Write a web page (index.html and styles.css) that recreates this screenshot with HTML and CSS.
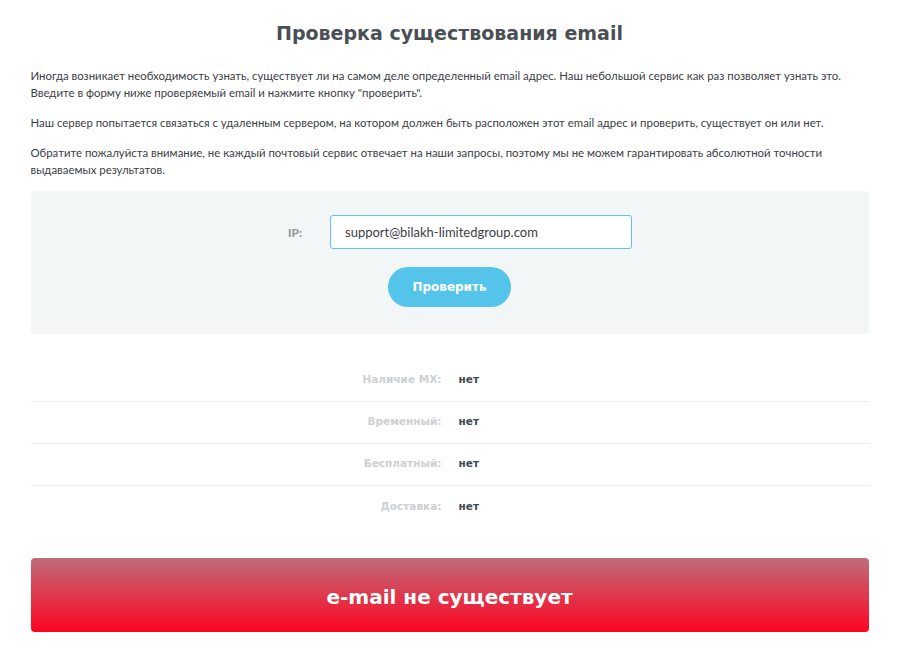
FILE: index.html
```html
<!DOCTYPE html>
<html lang="ru">
<head>
  <meta charset="UTF-8">
  <meta name="viewport" content="width=device-width, initial-scale=1.0">
  <title>Проверка существования email</title>
  <link rel="stylesheet" href="styles.css">
</head>
<body>
  <div class="container">
    <h1 class="title">Проверка существования email</h1>

    <p class="text">Иногда возникает необходимость узнать, существует ли на самом деле определенный email адрес. Наш небольшой сервис как раз позволяет узнать это. Введите в форму ниже проверяемый email и нажмите кнопку "проверить".</p>
    <p class="text">Наш сервер попытается связаться с удаленным сервером, на котором должен быть расположен этот email адрес и проверить, существует он или нет.</p>
    <p class="text">Обратите пожалуйста внимание, не каждый почтовый сервис отвечает на наши запросы, поэтому мы не можем гарантировать абсолютной точности выдаваемых результатов.</p>

    <form class="check-form" onsubmit="return false;">
      <div class="form-row">
        <label class="form-label" for="email">IP:</label>
        <input class="form-input" id="email" type="text" value="support@bilakh-limitedgroup.com">
      </div>
      <button class="check-btn" type="submit">Проверить</button>
    </form>

    <div class="results">
      <div class="result-row">
        <span class="result-name">Наличие MX:</span>
        <span class="result-value">нет</span>
      </div>
      <div class="result-row">
        <span class="result-name">Временный:</span>
        <span class="result-value">нет</span>
      </div>
      <div class="result-row">
        <span class="result-name">Бесплатный:</span>
        <span class="result-value">нет</span>
      </div>
      <div class="result-row">
        <span class="result-name">Доставка:</span>
        <span class="result-value">нет</span>
      </div>
    </div>

    <div class="verdict">e-mail не существует</div>
  </div>
</body>
</html>
```

FILE: styles.css
```css
body {
  margin: 0;
  background: #fff;
  font-family: Lato, "Open Sans", sans-serif;
  color: #3b4046;
}

.container {
  width: 838px;
  margin: 0 auto;
  padding-left: 2px;
}

.title {
  margin: 21px 0 22px;
  font-family: "DejaVu Sans", sans-serif;
  font-size: 19px;
  line-height: 24px;
  font-weight: bold;
  text-align: center;
  color: #4a4f55;
}

.text {
  margin: 0 0 13px;
  font-size: 11.4px;
  line-height: 17px;
}

.check-form {
  margin-top: 12px;
  padding: 24px 0 27px;
  background-color: #f3f6f7;
  border-radius: 4px;
  display: flex;
  flex-direction: column;
  align-items: center;
}

.form-row {
  display: flex;
  align-items: center;
  margin-left: 21px;
}

.form-label {
  width: 42px;
  font-size: 12px;
  font-weight: bold;
  color: #8e9296;
}

.form-input {
  box-sizing: border-box;
  width: 302px;
  height: 34px;
  padding: 0 14px;
  border: 1px solid #5ec3e6;
  border-radius: 3px;
  background: #fff;
  font-family: Lato, sans-serif;
  font-size: 13px;
  color: #3b4046;
  outline: none;
}

.check-btn {
  margin-top: 18px;
  width: 123px;
  height: 40px;
  border: none;
  border-radius: 20px;
  background-color: #55c4ea;
  color: #fff;
  font-family: "DejaVu Sans", sans-serif;
  font-size: 12px;
  font-weight: bold;
  cursor: pointer;
}

.results {
  margin-top: 26px;
}

.result-row {
  box-sizing: border-box;
  display: flex;
  align-items: center;
  height: 42px;
  padding-bottom: 3px;
  border-bottom: 1px solid #eeeeee;
  font-family: "DejaVu Sans", sans-serif;
  font-size: 10.5px;
  font-weight: bold;
}

.result-row:last-child {
  border-bottom: none;
}

.result-name {
  width: 411px;
  text-align: right;
  color: #cdd0d3;
}

.result-value {
  margin-left: 17px;
  color: #44494f;
}

.verdict {
  box-sizing: border-box;
  margin-top: 30px;
  height: 74px;
  padding-top: 4px;
  border-radius: 4px;
  background: linear-gradient(180deg, #bf6d7b, #fd0420);
  display: flex;
  align-items: center;
  justify-content: center;
  font-family: "DejaVu Sans", sans-serif;
  font-size: 20px;
  font-weight: bold;
  color: #fff;
}
```
